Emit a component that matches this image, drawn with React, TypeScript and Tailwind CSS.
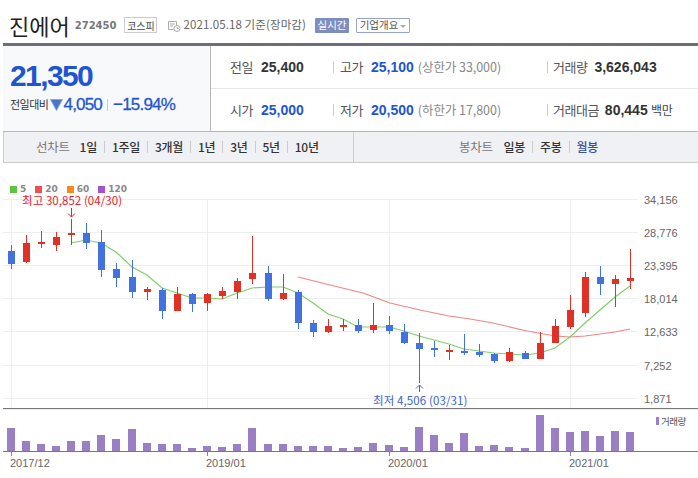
import React from "react";

const kr = "font-['Noto_Sans_CJK_KR','Noto_Sans',sans-serif]";
const num = "font-['Liberation_Sans','Noto_Sans_CJK_KR',sans-serif]";

const RED = "#e03127";
const BLUE = "#4272e0";

// x, wick top, wick bottom, body top, body bottom, up?
const candles: [number, number, number, number, number, boolean][] = [
  [11, 245, 269, 251, 264, false],
  [26, 235, 263, 243, 262, true],
  [41, 231, 248, 242, 244, true],
  [56, 232, 251, 237, 245, true],
  [71, 219, 245, 233, 235, true],
  [86, 223, 249, 233, 243, false],
  [101, 230, 277, 242, 270, false],
  [116, 263, 287, 269, 278, false],
  [132, 260, 298, 277, 292, false],
  [147, 287, 300, 289, 292, true],
  [162, 288, 319, 290, 311, false],
  [177, 287, 311, 294, 311, true],
  [192, 293, 312, 294, 304, false],
  [207, 293, 311, 294, 303, true],
  [222, 287, 299, 291, 296, true],
  [237, 278, 299, 281, 292, true],
  [252, 236, 284, 273, 279, true],
  [268, 266, 301, 273, 299, false],
  [283, 274, 300, 293, 299, true],
  [298, 290, 329, 292, 323, false],
  [313, 320, 337, 323, 332, false],
  [328, 319, 333, 326, 332, true],
  [343, 319, 331, 325, 327, true],
  [358, 319, 333, 325, 331, false],
  [373, 303, 333, 325, 330, true],
  [389, 316, 334, 325, 331, false],
  [404, 324, 344, 332, 343, false],
  [419, 333, 383, 343, 349, false],
  [434, 341, 357, 348, 350, false],
  [449, 345, 360, 350, 352, true],
  [464, 334, 355, 351, 353, false],
  [479, 344, 357, 352, 355, false],
  [494, 353, 363, 354, 361, false],
  [509, 348, 362, 352, 361, true],
  [525, 351, 359, 353, 359, false],
  [540, 332, 359, 343, 359, true],
  [555, 319, 343, 326, 343, true],
  [570, 295, 329, 310, 327, true],
  [585, 272, 317, 277, 313, true],
  [600, 266, 295, 277, 284, false],
  [615, 275, 307, 279, 284, true],
  [630, 249, 289, 278, 281, true],
];

const volumeTops = [
  428, 441, 444, 446, 441, 441, 435, 439, 429, 443, 444, 444, 448, 446, 447, 444, 428, 444, 444, 446, 446, 446, 448,
  447, 443, 445, 447, 427, 435, 443, 433, 446, 445, 447, 448, 415, 428, 432, 431, 436, 431, 432,
];

const ma5 =
  "71,243 86,240 101,243 116,252 132,267 147,275 162,288 177,293 192,298 207,298 222,299 237,293 252,288 268,287 283,287 298,293 313,303 328,314 343,319 358,327 373,327 389,327 404,331 419,336 434,340 449,344 464,349 479,351 494,353 509,354 525,355 540,353 555,348 570,337 585,323 600,310 615,297 630,286";
const ma20 =
  "298,277 330,285 363,293 390,303 420,310 449,316 470,319 493,323 527,331 555,336 570,337 585,336 600,334 615,332 630,329";

const gridY = [199, 232, 265, 298, 331, 365, 398];
const axis = ["34,156", "28,776", "23,395", "18,014", "12,633", "7,252", "1,871"];
const dates: [number, string][] = [
  [11, "2017/12"],
  [207, "2019/01"],
  [389, "2020/01"],
  [570, "2021/01"],
];

const Sep = ({ h = "h-3" }: { h?: string }) => <span className={`w-px bg-[#ccc] ${h}`} />;

const Stat = ({ label, value, blue, extra, w, gap }: { label: string; value: string; blue?: boolean; extra?: string; w: string; gap: string }) => (
  <div className={`flex items-center ${w}`}>
    <span className={`${kr} text-[13px] tracking-[-0.5px] text-[#555]`}>{label}</span>
    <span className={`${num} ${gap} text-[14px] font-bold ${blue ? "text-[#1f55d0]" : "text-[#333]"}`}>{value}</span>
    {extra && <span className={`${kr} ml-[4px] text-[12.5px] tracking-[-0.05px] text-[#888]`}>{extra}</span>}
  </div>
);

const NavItems = ({ items, last }: { items: string[]; last?: string }) => (
  <div className="flex items-center">
    {items.map((t, i) => (
      <React.Fragment key={t}>
        {i > 0 && <Sep />}
        <span className={`${kr} px-[7px] text-[12px] font-medium tracking-[-0.3px] ${t === last ? "text-[#3a4fa5]" : "text-[#333]"}`}>{t}</span>
      </React.Fragment>
    ))}
  </div>
);

const Legend = ({ color, label }: { color: string; label: string }) => (
  <div className="flex items-center gap-[3px]">
    <span className="h-[7px] w-[7px]" style={{ background: color }} />
    <span className="font-['DejaVu_Sans',sans-serif] text-[9px] font-bold leading-none text-[#888]">{label}</span>
  </div>
);

export default function App() {
  return (
    <div className="h-[478px] w-[698px] overflow-hidden bg-white">
      {/* title */}
      <div className="flex h-[43px] items-center pl-[9px] pt-[6px]">
        <h1 className={`${kr} text-[22px] font-normal leading-none text-[#222]`}>진에어</h1>
        <span className="ml-[5px] mt-[2px] font-['DejaVu_Sans',sans-serif] text-[10px] font-bold text-[#777]">272450</span>
        <span className={`${kr} ml-[8px] mt-[1px] flex h-[16px] w-[33px] items-center justify-center border border-[#ccc] text-[10px] text-[#444]`}>코스피</span>
        <svg className="ml-[11px] mt-[2px]" width="13" height="12" viewBox="0 0 13 12" fill="none" stroke="#aaa">
          <path d="M.5 1.5h8v6M.5 1.5v8h5M2 4h5M2 6h3" />
          <circle cx="9" cy="8.500" r="3" fill="#fff" />
          <path d="M9 7v1.500h1.500" />
        </svg>
        <span className={`${kr} ml-[2px] mt-[1px] text-[11.5px] tracking-[0.1px] text-[#666]`}>2021.05.18 기준(장마감)</span>
        <span className={`${kr} ml-[9px] mt-[1px] flex h-[15px] w-[34px] items-center justify-center rounded-[1px] bg-[#7f8ebf] text-[10.5px] text-white`}>실시간</span>
        <span className={`${kr} ml-[7px] mt-[1px] flex h-[15px] w-[54px] items-center justify-center gap-[2px] rounded-[1px] border border-[#98a2cb] text-[10.5px] text-[#555]`}>
          기업개요
          <span className="mt-[2px] border-x-[3px] border-t-[3px] border-x-transparent border-t-[#aab]" />
        </span>
      </div>

      {/* quote */}
      <div className="ml-[3px] flex h-[89px] border-b border-t-[3px] border-b-[#b5b5b5] border-t-[#6d6f78]">
        <div className="w-[208px] border-r border-r-[#b5b5b5] bg-[#f8f9fb] pl-[7px]">
          <div className={`${num} mt-[17px] text-[30px] font-bold leading-[26px] tracking-[-1.6px] text-[#1f55d0]`}>21,350</div>
          <div className="mt-[7px] flex items-center">
            <span className={`${kr} text-[11px] tracking-[-0.5px] text-[#333]`}>전일대비</span>
            <svg className="ml-[2px]" width="13" height="12" viewBox="0 0 13 12">
              <path d="M.5 .5h12L6.500 11.500z" fill="#4a76c8" stroke="#8aa5d8" />
            </svg>
            <span className={`${num} text-[17px] font-normal leading-none tracking-[-0.8px] text-[#1f55d0] [-webkit-text-stroke:0.3px_#1f55d0]`}>4,050</span>
            <span className="ml-[5px] h-3 w-px bg-[#ccc]" />
            <span className={`${num} ml-[5px] text-[17px] font-normal leading-none tracking-[-0.8px] text-[#1f55d0] [-webkit-text-stroke:0.3px_#1f55d0]`}>−15.94%</span>
          </div>
        </div>
        <div className="flex flex-1 flex-col">
          <div className="flex h-[43px] items-center border-b border-b-[#e6e6e6] pl-[19px]">
            <Stat label="전일" value="25,400" w="w-[103px]" gap="ml-[8px]" />
            <Sep h="h-[12px]" />
            <div className="ml-[6px]" />
            <Stat label="고가" value="25,100" blue extra="(상한가 33,000)" w="w-[207px]" gap="ml-[8px]" />
            <Sep h="h-[12px]" />
            <div className="ml-[5px]" />
            <Stat label="거래량" value="3,626,043" w="w-[130px]" gap="ml-[7px]" />
          </div>
          <div className="flex h-[42px] items-center pl-[19px]">
            <Stat label="시가" value="25,000" blue w="w-[103px]" gap="ml-[8px]" />
            <Sep h="h-[12px]" />
            <div className="ml-[6px]" />
            <Stat label="저가" value="20,500" blue extra="(하한가 17,800)" w="w-[207px]" gap="ml-[8px]" />
            <Sep h="h-[12px]" />
            <div className="ml-[5px]" />
            <Stat label="거래대금" value="80,445" w="w-[98px]" gap="ml-[6px]" />
            <span className={`${kr} text-[12px] tracking-[-0.3px] text-[#444]`}>백만</span>
          </div>
        </div>
      </div>

      {/* period nav */}
      <div className="ml-[3px] flex h-[31px] border-b border-l border-b-[#ccc] border-l-[#ccc] bg-[#f0f1f5]">
        <div className="flex w-[350px] items-center border-r border-r-[#ccc] pl-[32px]">
          <span className={`${kr} mr-[3px] text-[12.5px] tracking-[-0.3px] text-[#777]`}>선차트</span>
          <NavItems items={["1일", "1주일", "3개월", "1년", "3년", "5년", "10년"]} />
        </div>
        <div className="flex flex-1 items-center pl-[105px]">
          <span className={`${kr} mr-[4px] text-[12.5px] tracking-[-0.3px] text-[#777]`}>봉차트</span>
          <NavItems items={["일봉", "주봉", "월봉"]} last="월봉" />
        </div>
      </div>

      {/* moving average legend */}
      <div className="ml-[10px] mt-[22px] flex h-[8px] items-center gap-[9px]">
        <Legend color="#5cc441" label="5" />
        <Legend color="#ef4f50" label="20" />
        <Legend color="#f78a1e" label="60" />
        <Legend color="#a054d0" label="120" />
      </div>

      <svg className="block overflow-visible" width="698" height="285" viewBox="0 193 698 285" shapeRendering="crispEdges">
        {gridY.map((y) => (
          <line key={y} x1="3" x2="638" y1={y + 0.5} y2={y + 0.5} stroke="#eee" />
        ))}
        {dates.map(([x]) => (
          <line key={x} x1={x + 0.5} x2={x + 0.5} y1="199" y2="408" stroke="#eee" />
        ))}

        <polyline points={ma20} fill="none" stroke="#f08585" strokeWidth="1.2" shapeRendering="auto" />
        <polyline points={ma5} fill="none" stroke="#7fd068" strokeWidth="1.2" shapeRendering="auto" />

        {candles.map(([x, hi, lo, top, bot, up]) => (
          <g key={x} fill={up ? RED : BLUE}>
            <rect x={x} y={hi} width="1" height={lo - hi} />
            <rect x={x - 3} y={top} width="7" height={bot - top} />
          </g>
        ))}

        <g fontFamily="'Noto Sans CJK KR',sans-serif" fontSize="11.500" shapeRendering="auto">
          <text x="22" y="205" fill="#e8202a" letterSpacing="0.05">최고 30,852 (04/30)</text>
          <path d="M71.500 208v9M68 213.500l3.500 3.500 3.500-3.500" fill="none" stroke="#e8202a" />
          <text x="373" y="405" fill="#3b66c8" letterSpacing="0.1">최저 4,506 (03/31)</text>
          <path d="M419.500 392v-7M416 388.500l3.500-3.500 3.500 3.500" fill="none" stroke="#3b66c8" />
        </g>

        <g fontFamily="'Liberation Sans',sans-serif" fontSize="11" fill="#666" shapeRendering="auto">
          {axis.map((t, i) => (
            <text key={t} x="644" y={gridY[i] + 5}>{t}</text>
          ))}
          {dates.map(([x, t]) => (
            <text key={t} x={x - 1} y="467">{t}</text>
          ))}
        </g>

        <line x1="3" x2="698" y1="408.500" y2="408.500" stroke="#777" />
        <line x1="3" x2="698" y1="409.500" y2="409.500" stroke="#eee" />

        {candles.map(([x], i) => (
          <rect key={x} x={x - 4} y={volumeTops[i]} width="8" height={451 - volumeTops[i]} fill="#9a7fc4" />
        ))}
        <line x1="3" x2="698" y1="451.500" y2="451.500" stroke="#777" />
        {dates.map(([x]) => (
          <line key={x} x1={x + 0.5} x2={x + 0.5} y1="452" y2="456" stroke="#888" />
        ))}

        <rect x="656" y="417" width="3" height="8" fill="#9a7fc4" />
        <text x="661" y="425" fontFamily="'Noto Sans CJK KR',sans-serif" fontSize="9.500" letterSpacing="-0.5" fill="#555" shapeRendering="auto">거래량</text>
      </svg>
    </div>
  );
}
